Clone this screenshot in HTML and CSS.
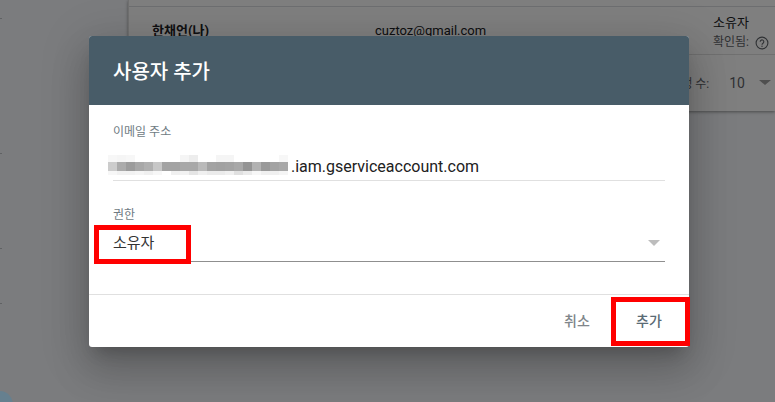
FILE: index.html
```html
<!DOCTYPE html>
<html lang="ko">
<head>
<meta charset="utf-8">
<title>사용자 추가</title>
<link rel="stylesheet" href="styles.css">
</head>
<body>
<div class="page">
  <aside class="sidebar">
    <span class="tick tick-a"></span>
    <span class="tick tick-b"></span>
    <span class="tick tick-c"></span>
    <span class="tick tick-d"></span>
  </aside>
  <main class="card">
    <div class="row-top"></div>
    <div class="row-user">
      <div class="user-name">한채언(나)</div>
      <div class="user-mail">cuztoz@gmail.com</div>
      <div class="user-role">
        <div class="role-name">소유자</div>
        <div class="role-state">확인됨:
          <svg class="help" viewBox="0 0 14 14" width="14" height="14"><circle cx="7" cy="7" r="5.9" fill="none" stroke="currentColor" stroke-width="1.1"/><path d="M5.2 5.7a1.8 1.8 0 1 1 2.8 1.5c-.7.5-1 .8-1 1.5" fill="none" stroke="currentColor" stroke-width="1.1"/><circle cx="7" cy="10.3" r=".7" fill="currentColor"/></svg>
        </div>
      </div>
    </div>
    <div class="row-pager">
      <span class="pager-label">페이지당 행 수:</span>
      <span class="pager-value">10</span>
      <span class="arrow arrow-pager"></span>
    </div>
  </main>
</div>
<div class="overlay"></div>
<span class="avatar"></span>
<section class="dialog">
  <header class="dialog-head">사용자 추가</header>
  <div class="dialog-body">
    <div class="field field-email">
      <div class="field-label">이메일 주소</div>
      <div class="field-input">
        <svg class="mosaic" width="180" height="20" viewBox="0 0 20 20" preserveAspectRatio="none" shape-rendering="crispEdges">
          <g fill="#000">
            <rect x="0" y="0" width="1" height="7" fill-opacity=".03"/><rect x="1" y="0" width="1" height="7" fill-opacity=".04"/><rect x="2" y="0" width="1" height="7" fill-opacity=".03"/>
            <rect x="8" y="0" width="1" height="7" fill-opacity=".04"/><rect x="9" y="0" width="1" height="7" fill-opacity=".07"/><rect x="12" y="0" width="1" height="7" fill-opacity=".04"/><rect x="13" y="0" width="1" height="7" fill-opacity=".04"/><rect x="19" y="0" width="1" height="7" fill-opacity=".03"/>
            <rect x="0" y="7" width="1" height="9" fill-opacity=".2"/><rect x="1" y="7" width="1" height="9" fill-opacity=".33"/><rect x="2" y="7" width="1" height="9" fill-opacity=".39"/><rect x="3" y="7" width="1" height="9" fill-opacity=".34"/><rect x="4" y="7" width="1" height="9" fill-opacity=".31"/><rect x="5" y="7" width="1" height="9" fill-opacity=".22"/><rect x="6" y="7" width="1" height="9" fill-opacity=".36"/><rect x="7" y="7" width="1" height="9" fill-opacity=".36"/><rect x="8" y="7" width="1" height="9" fill-opacity=".34"/><rect x="9" y="7" width="1" height="9" fill-opacity=".34"/><rect x="10" y="7" width="1" height="9" fill-opacity=".27"/><rect x="11" y="7" width="1" height="9" fill-opacity=".36"/><rect x="12" y="7" width="1" height="9" fill-opacity=".37"/><rect x="13" y="7" width="1" height="9" fill-opacity=".36"/><rect x="14" y="7" width="1" height="9" fill-opacity=".34"/><rect x="15" y="7" width="1" height="9" fill-opacity=".42"/><rect x="16" y="7" width="1" height="9" fill-opacity=".3"/><rect x="17" y="7" width="1" height="9" fill-opacity=".4"/><rect x="18" y="7" width="1" height="9" fill-opacity=".36"/><rect x="19" y="7" width="1" height="9" fill-opacity=".34"/>
            <rect x="0" y="16" width="1" height="4" fill-opacity=".03"/><rect x="1" y="16" width="1" height="4" fill-opacity=".05"/><rect x="2" y="16" width="1" height="4" fill-opacity=".05"/><rect x="3" y="16" width="1" height="4" fill-opacity=".04"/><rect x="4" y="16" width="1" height="4" fill-opacity=".06"/><rect x="5" y="16" width="1" height="4" fill-opacity=".03"/><rect x="7" y="16" width="1" height="4" fill-opacity=".06"/><rect x="8" y="16" width="1" height="4" fill-opacity=".05"/><rect x="9" y="16" width="1" height="4" fill-opacity=".1"/><rect x="10" y="16" width="1" height="4" fill-opacity=".06"/><rect x="11" y="16" width="1" height="4" fill-opacity=".08"/><rect x="12" y="16" width="1" height="4" fill-opacity=".08"/><rect x="13" y="16" width="1" height="4" fill-opacity=".06"/><rect x="14" y="16" width="1" height="4" fill-opacity=".12"/><rect x="15" y="16" width="1" height="4" fill-opacity=".08"/><rect x="16" y="16" width="1" height="4" fill-opacity=".03"/><rect x="17" y="16" width="1" height="4" fill-opacity=".06"/><rect x="18" y="16" width="1" height="4" fill-opacity=".06"/><rect x="19" y="16" width="1" height="4" fill-opacity=".04"/>
          </g>
        </svg>
        <span class="field-value">.iam.gserviceaccount.com</span>
      </div>
    </div>
    <div class="field field-role">
      <div class="field-label">권한</div>
      <div class="field-select">
        <span class="select-value">소유자</span>
        <span class="arrow arrow-select"></span>
      </div>
    </div>
  </div>
  <footer class="dialog-foot">
    <button class="btn btn-cancel" type="button">취소</button>
    <button class="btn btn-add" type="button">추가</button>
  </footer>
  <div class="mark mark-role"></div>
  <div class="mark mark-add"></div>
</section>
</body>
</html>
```
FILE: styles.css
```css
* { box-sizing: border-box; }
html, body { margin: 0; height: 402px; overflow: hidden; }
body {
  position: relative;
  background: #f6f8fc;
  font-family: Roboto, "Noto Sans CJK KR", sans-serif;
  color: #202124;
}
.page { display: flex; align-items: flex-start; height: 402px; }

.sidebar {
  width: 128px;
  height: 402px;
  flex: none;
  display: flex;
  flex-direction: column;
  align-items: flex-start;
  padding-top: 18px;
}
.tick { width: 2px; height: 1px; background: #c0c4c8; }
.tick-b { margin-top: 134px; }
.tick-c { margin-top: 94px; }
.tick-d { margin-top: 54px; }
.avatar {
  position: absolute;
  left: -14px;
  top: 391px;
  width: 27px;
  height: 27px;
  border-radius: 50%;
  background: #66808f;
}

.card {
  flex: 1;
  height: 111px;
  background: #fff;
  border-left: 1px solid #e0e0e0;
  box-shadow: 0 1px 3px rgba(0,0,0,.4);
}
.row-top { height: 7px; border-bottom: 1px solid #dadce0; }
.row-user {
  height: 48px;
  border-bottom: 1px solid #e0e0e0;
  display: flex;
  padding-left: 23px;
}
.user-name { width: 223px; padding-top: 15px; font-size: 13px; line-height: 18px; font-weight: 700; }
.user-mail { width: 338px; padding-top: 15px; font-size: 13px; line-height: 18px; }
.role-name { padding-top: 7px; font-size: 13px; line-height: 17px; }
.role-state { display: flex; align-items: center; gap: 6px; margin-top: 3px; font-size: 12px; line-height: 17px; color: #5f6368; white-space: nowrap; }
.help { flex: none; }
.row-pager {
  height: 55px;
  display: flex;
  align-items: center;
  justify-content: flex-end;
  padding-right: 4px;
  font-size: 12px;
  color: #5f6368;
}
.pager-value { margin-left: 20px; font-size: 14px; }
.arrow { width: 0; height: 0; border-style: solid; border-color: transparent; }
.arrow-pager { margin-left: 14px; border-width: 5px 6px 0; border-top-color: #9e9e9e; }

.overlay { position: absolute; inset: 0; background: rgba(0,0,0,.5); }

.dialog {
  position: absolute;
  left: 89px;
  top: 36px;
  width: 600px;
  height: 311px;
  display: flex;
  flex-direction: column;
  background: #fff;
  border-radius: 3px;
  box-shadow: 0 11px 15px -7px rgba(0,0,0,.2), 0 24px 38px 3px rgba(0,0,0,.14), 0 9px 46px 8px rgba(0,0,0,.12);
}
.dialog-head {
  height: 69px;
  flex: none;
  display: flex;
  align-items: center;
  padding-left: 24px;
  background: #485c68;
  border-radius: 3px 3px 0 0;
  color: #fff;
  font-size: 20px;
  font-weight: 500;
}
.dialog-body { height: 190px; flex: none; padding: 18px 24px 0; border-bottom: 1px solid #e0e0e0; }
.field-label { font-size: 12px; line-height: 18px; color: #6f7b83; }
.field-input {
  position: relative;
  height: 40px;
  padding: 16px 0 0 178px;
  border-bottom: 1px solid #e0e0e0;
}
.mosaic { position: absolute; left: -5px; top: 14px; }
.field-value { font-size: 16px; line-height: 20px; color: #212121; }
.field-role { margin-top: 25px; }
.field-select {
  height: 38px;
  display: flex;
  align-items: center;
  justify-content: space-between;
  padding-right: 5px;
  border-bottom: 1px solid #8f8f8f;
}
.select-value { font-size: 15px; color: #333; margin-top: -3px; }
.arrow-select { border-width: 6px 6px 0; border-top-color: #bdbdbd; margin-top: 0; }
.dialog-foot {
  flex: 1;
  display: flex;
  align-items: center;
  justify-content: flex-end;
  padding: 0 27px 2px 0;
}
.btn {
  padding: 0;
  width: 26px;
  border: 0;
  background: none;
  font-family: inherit;
  font-size: 14px;
  font-weight: 500;
  white-space: nowrap;
  display: flex;
  justify-content: center;
}
.btn-cancel { color: #80868b; margin-right: 46px; }
.btn-add { color: #5a6b75; }

.mark { position: absolute; border: 5px solid #f00; }
.mark-role { left: 5px; top: 189px; width: 97px; height: 39px; }
.mark-add { left: 522px; top: 261px; width: 79px; height: 49px; }
```
